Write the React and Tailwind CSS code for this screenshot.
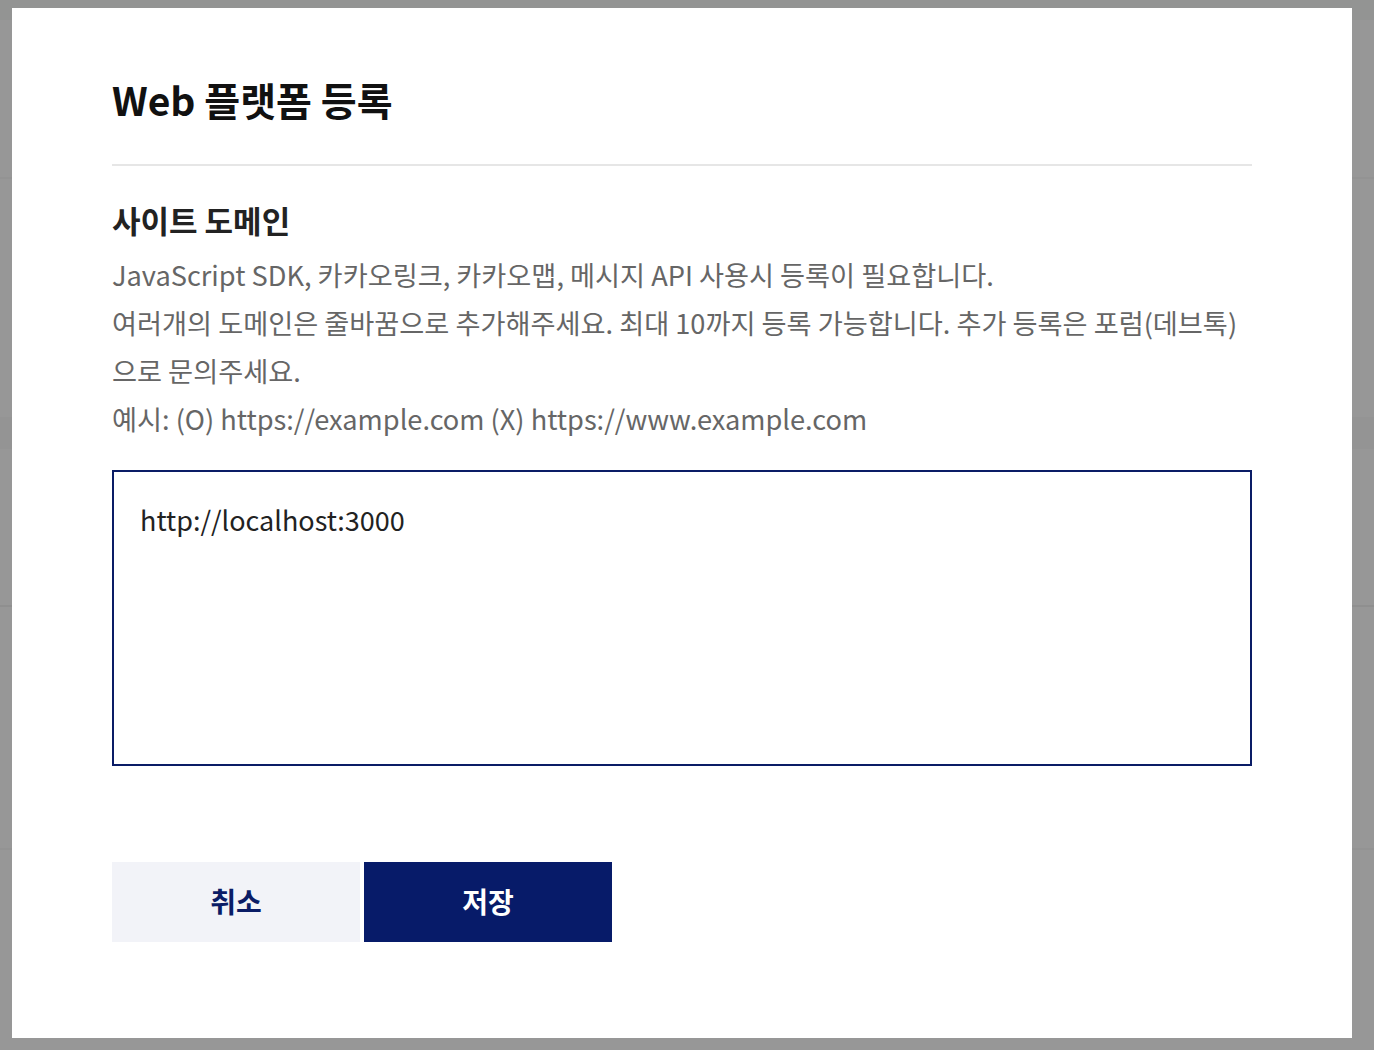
import React from 'react';

const font = { fontFamily: '"Noto Sans CJK KR", "Noto Sans", sans-serif' };

const App = () => {
  return (
    <div className="relative w-full h-[1050px] bg-[#979797] overflow-hidden" style={font}>
      {/* dimmed page underneath */}
      <div className="h-[20px] bg-[#939493]" />
      <div className="h-[157px]" />
      <div className="h-[2px] bg-[#939393]" />
      <div className="h-[238px]" />
      <div className="h-[32px] bg-[#949494]" />
      <div className="h-[156px]" />
      <div className="h-[2px] bg-[#8f8f8f]" />
      <div className="h-[241px]" />
      <div className="h-[2px] bg-[#939393]" />

      {/* modal */}
      <div className="absolute left-[12px] top-[8px] w-[1340px] h-[1030px] bg-white px-[100px]">
        <h2 className="mt-[63px] text-[39px] leading-[56px] font-bold text-[#111]">Web 플랫폼 등록</h2>
        <div className="mt-[37px] h-[2px] bg-[#e6e6e6]" />

        <h3 className="mt-[32px] text-[31px] leading-[44px] font-bold text-[#222]">사이트 도메인</h3>
        <div className="mt-[8px] text-[27.2px] leading-[48px] text-[#666]">
          <p>JavaScript SDK, 카카오링크, 카카오맵, 메시지 API 사용시 등록이 필요합니다.</p>
          <p>
            여러개의 도메인은 줄바꿈으로 추가해주세요. 최대 10까지 등록 가능합니다. 추가 등록은 포럼(데브톡)으로
            문의주세요.
          </p>
          <p>예시: (O) https://example.com (X) https://www.example.com</p>
        </div>

        <textarea
          className="mt-[28px] block w-full h-[296px] border-2 border-[#0a1c66] px-[26px] py-[28px] text-[27px] leading-[40px] text-[#222] resize-none outline-none"
          style={font}
          defaultValue="http://localhost:3000"
        />

        <div className="mt-[96px] flex gap-[4px]">
          <button
            className="w-[248px] h-[80px] pb-[3px] bg-[#f2f3f8] text-[#0a1c66] text-[28px] font-bold"
            style={font}
          >
            취소
          </button>
          <button
            className="w-[248px] h-[80px] pb-[3px] bg-[#071b69] text-white text-[28px] font-bold"
            style={font}
          >
            저장
          </button>
        </div>
      </div>
    </div>
  );
};

export default App;
